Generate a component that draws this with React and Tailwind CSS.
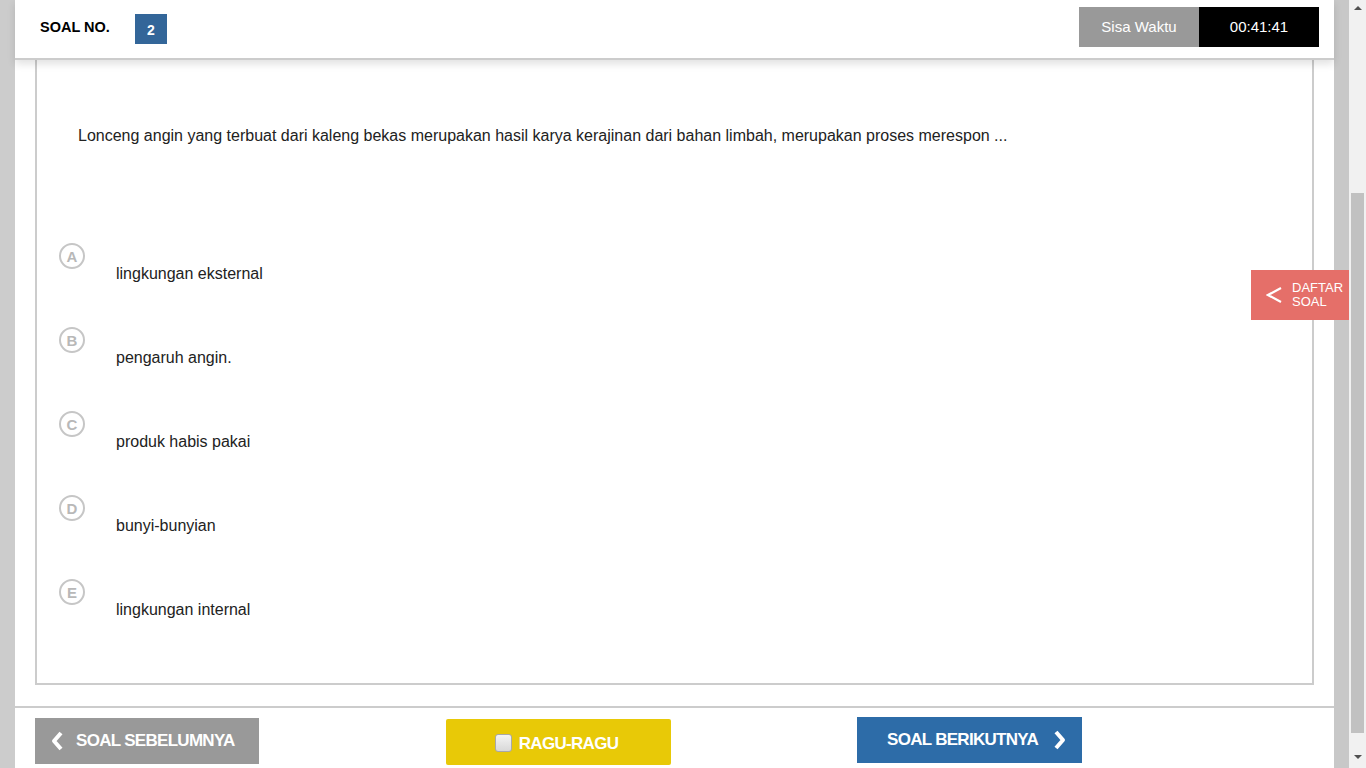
import React from "react";

const options = [
    { key: "A", text: "lingkungan eksternal" },
    { key: "B", text: "pengaruh angin." },
    { key: "C", text: "produk habis pakai" },
    { key: "D", text: "bunyi-bunyian" },
    { key: "E", text: "lingkungan internal" },
];

const OptionCircle = ({ letter }) => (
    <div className="flex h-[26px] w-[26px] shrink-0 items-center justify-center rounded-full border-[2.5px] border-[#c6c6c6] text-[15px] font-bold leading-none text-[#b8b8b8]">
        {letter}
    </div>
);

const ChevronLeft = () => (
    <svg width="14" height="20" viewBox="0 0 14 20">
        <path d="M11 2 L4 10 L11 18" fill="none" stroke="#fff" strokeWidth="4" strokeLinejoin="round" />
    </svg>
);

const ChevronRight = () => (
    <svg width="14" height="20" viewBox="0 0 14 20">
        <path d="M3 2 L10 10 L3 18" fill="none" stroke="#fff" strokeWidth="4" strokeLinejoin="round" />
    </svg>
);

export default function App() {
    return (
        <div className="relative flex h-[768px] w-[1366px] overflow-hidden bg-white font-['Liberation_Sans',Arial,sans-serif] text-[#222]">
            <div className="w-[15px] shrink-0 bg-[#cccccc]" />

            <div className="flex w-[1319px] shrink-0 flex-col">
                {/* header */}
                <div className="relative z-10 flex h-[60px] shrink-0 items-start border-b-2 border-[#cccccc] bg-white shadow-[0_4px_8px_rgba(0,0,0,0.12)]">
                    <div className="mt-[19px] ml-[25px] w-[95px] text-[14.5px] font-bold leading-[16px] text-black">SOAL NO.</div>
                    <div className="mt-[14px] flex h-[30px] w-[32px] items-center justify-center bg-[#336699] pt-[2px] text-[14px] font-bold text-white">
                        2
                    </div>
                    <div className="mt-[7px] mr-[15px] ml-auto flex h-[40px]">
                        <div className="flex w-[120px] items-center justify-center bg-[#999999] text-[15px] text-white">Sisa Waktu</div>
                        <div className="flex w-[120px] items-center justify-center bg-black text-[15px] text-white">00:41:41</div>
                    </div>
                </div>

                {/* soal */}
                <div className="flex flex-1 flex-col px-[20px] pb-[21px]">
                    <div className="flex-1 border-x-2 border-b-2 border-[#cccccc] bg-white">
                        <p className="mt-[66px] pl-[41px] text-[16px] leading-[20px]">
                            Lonceng angin yang terbuat dari kaleng bekas merupakan hasil karya kerajinan dari bahan limbah, merupakan proses merespon ...
                        </p>
                        <div className="mt-[97px] pl-[22px]">
                            {options.map((opt) => (
                                <div key={opt.key} className="flex h-[84px] items-start">
                                    <OptionCircle letter={opt.key} />
                                    <div className="mt-[21px] ml-[31px] text-[16px] leading-[20px]">{opt.text}</div>
                                </div>
                            ))}
                        </div>
                    </div>
                </div>

                {/* footer */}
                <div className="flex h-[62px] shrink-0 items-start border-t-2 border-[#cccccc] bg-white pl-[20px]">
                    <div className="mt-[10px] flex h-[46px] w-[224px] items-center bg-[#999999] pl-[15px] text-white">
                        <ChevronLeft />
                        <span className="ml-[12px] text-[17px] font-bold tracking-[-0.7px]">SOAL SEBELUMNYA</span>
                    </div>
                    <div className="mt-[11px] ml-[187px] flex h-[46px] w-[225px] items-center justify-center rounded-[2px] bg-[#e8c907] pt-[3px] text-white">
                        <span className="mt-[-2px] ml-[-4px] inline-block h-[18px] w-[17px] rounded-[3px] border border-[#a8a8a8] bg-gradient-to-b from-[#f4f4f4] to-[#d8d8d8]" />
                        <span className="ml-[7px] text-[17px] font-bold tracking-[-0.7px]">RAGU-RAGU</span>
                    </div>
                    <div className="mt-[9px] ml-[186px] flex h-[46px] w-[225px] items-center bg-[#2d6ca8] pl-[30px] text-white">
                        <span className="text-[17px] font-bold tracking-[-0.7px]">SOAL BERIKUTNYA</span>
                        <span className="ml-[15px]">
                            <ChevronRight />
                        </span>
                    </div>
                </div>
            </div>

            <div className="w-[15px] shrink-0 bg-[#c8c8c8]" />

            {/* scrollbar */}
            <div className="flex w-[17px] shrink-0 flex-col items-center bg-[#f1f1f1]">
                <div className="mt-[6px] h-0 w-0 border-x-[4px] border-b-[4px] border-x-transparent border-b-[#505050]" />
                <div className="mt-[183px] h-[540px] w-[13px] bg-[#c1c1c1]" />
                <div className="mt-[22px] h-0 w-0 border-x-[4px] border-t-[4px] border-x-transparent border-t-[#505050]" />
            </div>

            {/* daftar soal tab */}
            <div className="absolute top-[270px] left-[1251px] flex h-[50px] w-[98px] items-center bg-[#e56f69] text-white">
                <svg className="ml-[15px]" width="16" height="18" viewBox="0 0 16 18">
                    <path d="M15 2 L2 9 L15 16" fill="none" stroke="#fff" strokeWidth="2.2" />
                </svg>
                <span className="ml-[10px] text-[13px] leading-[14px]">
                    DAFTAR
                    <br />
                    SOAL
                </span>
            </div>
        </div>
    );
}
